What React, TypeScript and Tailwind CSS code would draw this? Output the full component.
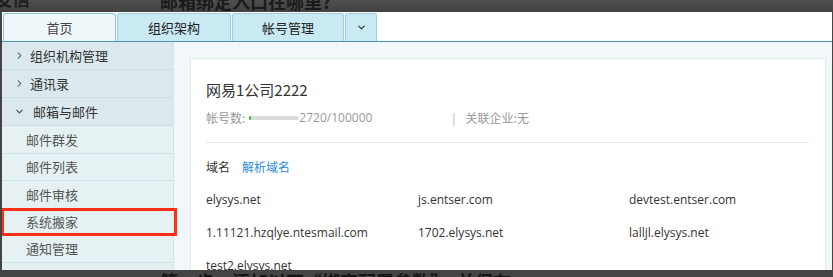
import { ChevronDown, ChevronRight } from 'lucide-react';

const cjk = "font-['Microsoft_YaHei','Noto_Sans_CJK_SC',sans-serif]";

const tabs = [
  { label: '首页', w: 'w-[113px]', active: true },
  { label: '组织架构', w: 'w-[114px]', active: false },
  { label: '帐号管理', w: 'w-[112px]', active: false },
];

const subItems = [
  { label: '邮件群发', h: 'h-[28px]' },
  { label: '邮件列表', h: 'h-[27px]' },
  { label: '邮件审核', h: 'h-[28px]' },
  { label: '系统搬家', h: 'h-[27px]', marked: true },
  { label: '通知管理', h: 'h-[27px]' },
];

const domains = [
  ['elysys.net', 'js.entser.com', 'devtest.entser.com'],
  ['1.11121.hzqlye.ntesmail.com', '1702.elysys.net', 'lalljl.elysys.net'],
  ['test2.elysys.net', '', ''],
];

function TopItem({ label, open }: { label: string; open?: boolean }) {
  return (
    <div className="h-[28px] flex items-center bg-[#dbe9ee] border-b border-[#c9dde5] text-[13px] text-[#333]">
      {open ? (
        <ChevronDown className="ml-[12px] w-[11px] h-[11px] text-[#444]" strokeWidth={2.2} />
      ) : (
        <ChevronRight className="ml-[12px] w-[11px] h-[11px] text-[#444]" strokeWidth={2.2} />
      )}
      <span className={open ? 'ml-[8px]' : 'ml-[5px]'}>{label}</span>
    </div>
  );
}

export default function App() {
  return (
    <div className={`relative w-[833px] h-[277px] overflow-hidden bg-[#444444] ${cjk}`}>
      {/* page behind the screenshot */}
      <div className="absolute left-0 top-0 w-full h-[12px] bg-gradient-to-b from-[#4e4e4e] to-[#424242]" />
      <div className="absolute left-[-6px] top-[-15px] text-[18px] font-bold text-[#1e1e1e]">发信</div>
      <div className="absolute left-[160px] top-[-12px] text-[18px] font-bold text-[#1a1a1a]">邮箱绑定入口在哪里?</div>
      <div className="absolute left-[160px] top-[268px] text-[18px] font-bold text-[#151515]">
        第一步：添加以下“绑定配置参数”，并保存
      </div>

      <div className="relative z-10 ml-[2px] mt-[12px] w-[830px] h-[258px] overflow-hidden bg-white flex flex-col">
        {/* tab bar */}
        <div className="h-[30px] shrink-0 flex items-end gap-[1px] pl-[1px] border-b border-[#4b92b3] bg-white">
          {tabs.map((t) => (
            <div
              key={t.label}
              className={`${t.w} h-[28px] flex items-center justify-center rounded-t-[3px] border border-b-0 text-[13px] ${
                t.active ? 'bg-[#f0f7fa] border-[#8fc6d8] text-[#444]' : 'bg-[#c9e9f3] border-[#9ccfdf] text-[#222]'
              }`}
            >
              {t.label}
            </div>
          ))}
          <div className="w-[32px] h-[28px] flex items-center justify-center rounded-t-[3px] border border-b-0 bg-[#c9e9f3] border-[#9ccfdf]">
            <ChevronDown className="w-[11px] h-[11px] text-[#333]" strokeWidth={2.4} />
          </div>
        </div>

        <div className="flex flex-1 min-h-0">
          {/* sidebar */}
          <div className="w-[172px] shrink-0 bg-[#e4eff2] border-r border-[#d3e3e8] flex flex-col">
            <TopItem label="组织机构管理" />
            <TopItem label="通讯录" />
            <TopItem label="邮箱与邮件" open />
            {subItems.map((s) => (
              <div
                key={s.label}
                className={`${s.h} relative flex items-center pl-[24px] bg-[#e6f1f3] border-b border-[#cfe2e8] text-[13px] text-[#555]`}
              >
                {s.label}
                {s.marked ? (
                  <span className="absolute left-[-1px] right-[-4px] top-[-1px] bottom-[-1px] border-[3px] border-[#ff3015]" />
                ) : null}
              </div>
            ))}
          </div>

          {/* content */}
          <div className="flex-1 bg-[#f2f7f9] pl-[16px] pt-[16px] pr-[6px]">
            <div className="h-full bg-white border border-[#e4e9eb] border-b-0 px-[15px]">
              <div className="pt-[21px] h-[41px] text-[15px] text-[#333] leading-[20px]">网易1公司2222</div>
              <div className="h-[17px] mt-[9px] flex items-center text-[12px] text-[#999]">
                <span>帐号数:</span>
                <span className="ml-[4px] w-[50px] h-[4px] bg-[#dcdcdc] rounded-[2px] flex">
                  <span className="w-[2px] h-full bg-[#2fc23a] rounded-[2px]" />
                </span>
                <span className="font-['Open_Sans',sans-serif]">2720/100000</span>
                <span className="ml-[80px] text-[#bbb]">|</span>
                <span className="ml-[10px]">关联企业:无</span>
              </div>
              <div className="mt-[16px] mr-[1px] border-t border-[#e8e8e8]" />
              <div className="h-[33px] mt-[7px] flex items-center text-[12px]">
                <span className="text-[#333]">域名</span>
                <span className="ml-[12px] text-[#2b8ce6]">解析域名</span>
              </div>
              <div className="font-['Open_Sans',sans-serif] text-[12px] text-[#333]">
                {domains.map((row, i) => (
                  <div key={i} className="h-[33px] flex items-center">
                    <span className="w-[212px]">{row[0]}</span>
                    <span className="w-[211px]">{row[1]}</span>
                    <span>{row[2]}</span>
                  </div>
                ))}
              </div>
            </div>
          </div>
        </div>
      </div>
    </div>
  );
}
